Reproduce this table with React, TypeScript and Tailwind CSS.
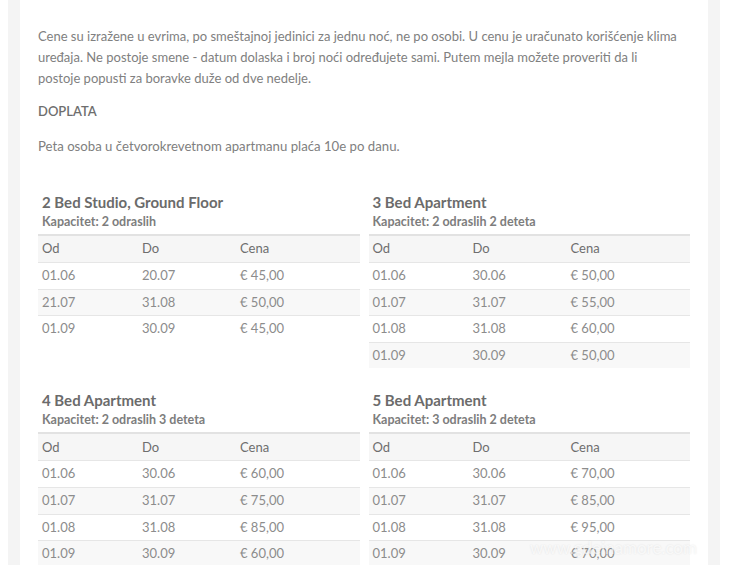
type Row = [string, string, string];

type Unit = {
  title: string;
  capacity: string;
  rows: Row[];
};

const units: Unit[] = [
  {
    title: '2 Bed Studio, Ground Floor',
    capacity: 'Kapacitet: 2 odraslih',
    rows: [
      ['01.06', '20.07', '€ 45,00'],
      ['21.07', '31.08', '€ 50,00'],
      ['01.09', '30.09', '€ 45,00'],
    ],
  },
  {
    title: '3 Bed Apartment',
    capacity: 'Kapacitet: 2 odraslih 2 deteta',
    rows: [
      ['01.06', '30.06', '€ 50,00'],
      ['01.07', '31.07', '€ 55,00'],
      ['01.08', '31.08', '€ 60,00'],
      ['01.09', '30.09', '€ 50,00'],
    ],
  },
  {
    title: '4 Bed Apartment',
    capacity: 'Kapacitet: 2 odraslih 3 deteta',
    rows: [
      ['01.06', '30.06', '€ 60,00'],
      ['01.07', '31.07', '€ 75,00'],
      ['01.08', '31.08', '€ 85,00'],
      ['01.09', '30.09', '€ 60,00'],
    ],
  },
  {
    title: '5 Bed Apartment',
    capacity: 'Kapacitet: 3 odraslih 2 deteta',
    rows: [
      ['01.06', '30.06', '€ 70,00'],
      ['01.07', '31.07', '€ 85,00'],
      ['01.08', '31.08', '€ 95,00'],
      ['01.09', '30.09', '€ 70,00'],
    ],
  },
];

function PriceTable({ unit }: { unit: Unit }) {
  return (
    <div>
      <h3 className="pl-1 text-[15px] font-bold leading-[18px] text-[#6b6b6b]">{unit.title}</h3>
      <p className="mt-[2px] pl-1 text-[12.5px] font-bold leading-[17px] text-[#7d7d7d]">{unit.capacity}</p>
      <div className="mt-[4px] border-t-2 border-[#e2e2e2] text-[13px]">
        <div className="flex h-[26px] items-center bg-[#f6f6f6] text-[#6e6e6e]">
          <span className="w-[100px] pl-1">Od</span>
          <span className="w-[98px] pl-1">Do</span>
          <span className="flex-1 pl-1">Cena</span>
        </div>
        {unit.rows.map(([from, to, price], idx) => (
          <div
            key={from}
            className={`flex h-[26.6px] items-center border-t border-[#e6e6e6] text-[#8c8c8c] ${
              idx % 2 === 1 ? 'bg-[#f8f8f8]' : 'bg-white'
            }`}
          >
            <span className="w-[100px] pl-1">{from}</span>
            <span className="w-[98px] pl-1">{to}</span>
            <span className="flex-1 pl-1">{price}</span>
          </div>
        ))}
      </div>
    </div>
  );
}

export default function App() {
  return (
    <div
      className="relative h-[565px] overflow-hidden bg-white"
      style={{ fontFamily: 'Lato, "Open Sans", sans-serif' }}
    >
      <div className="mx-[8px] w-[712px] bg-[#f4f4f4] px-[12px]">
        <div className="h-[565px] bg-white px-[18px] pt-[26px]">
          <p className="whitespace-nowrap text-[13px] leading-[21px] text-[#808080]">
            Cene su izražene u evrima, po smeštajnoj jedinici za jednu noć, ne po osobi. U cenu je uračunato korišćenje
            klima
            <br />
            uređaja. Ne postoje smene - datum dolaska i broj noći određujete sami. Putem mejla možete proveriti da li
            <br />
            postoje popusti za boravke duže od dve nedelje.
          </p>
          <p className="mt-[12px] text-[13px] font-semibold leading-[21px] text-[#6e6e6e]">DOPLATA</p>
          <p className="mt-[14px] text-[13.2px] leading-[21px] text-[#808080]">
            Peta osoba u četvorokrevetnom apartmanu plaća 10e po danu.
          </p>
          <div className="mt-[36px] grid grid-cols-2 gap-x-[9px] gap-y-[23px]">
            {units.map((unit) => (
              <PriceTable key={unit.title} unit={unit} />
            ))}
          </div>
        </div>
      </div>
      <span
        className="pointer-events-none absolute left-[530px] top-[535px] text-[17px] text-white/70"
        style={{ textShadow: '0 0 2px rgba(0,0,0,0.1)' }}
      >
        www.gdeinamore.com
      </span>
    </div>
  );
}
